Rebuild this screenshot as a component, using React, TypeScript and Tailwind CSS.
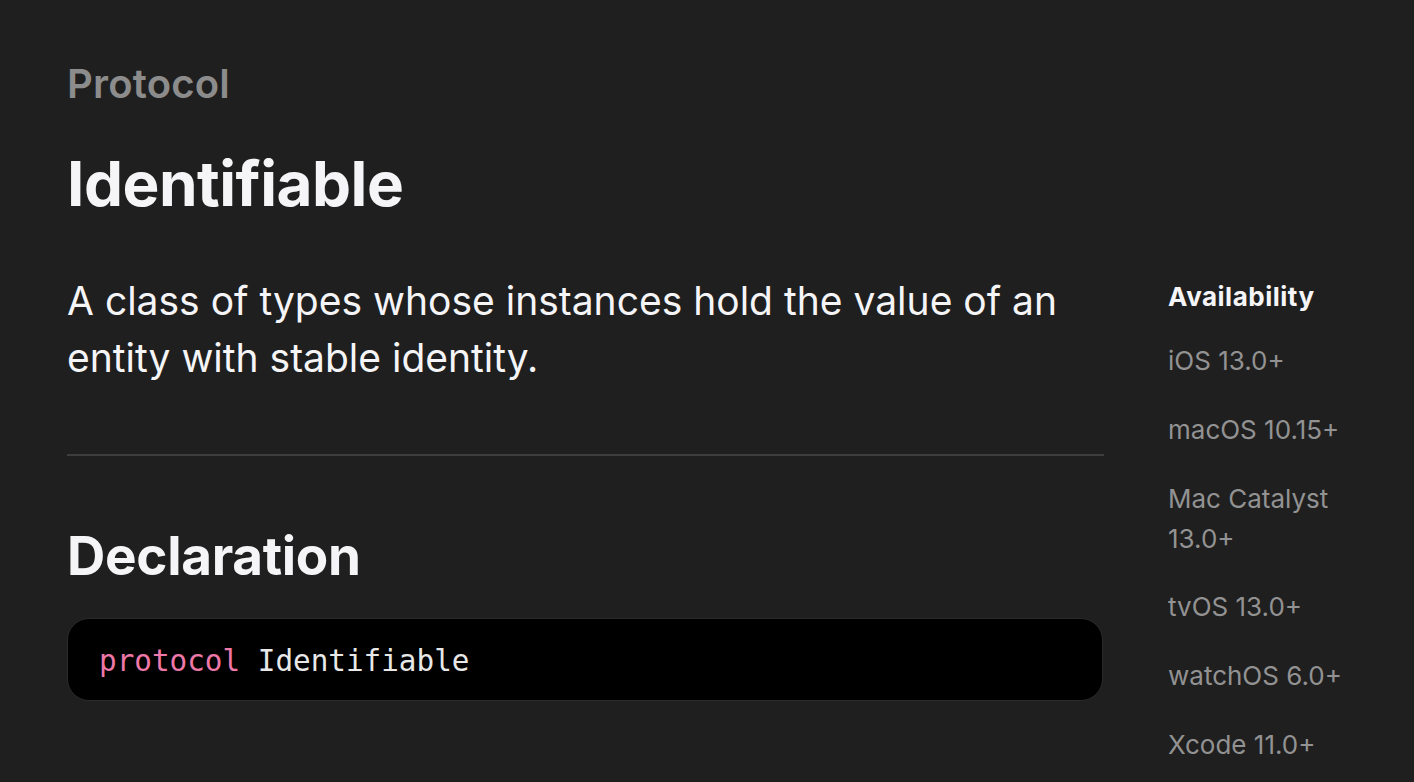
const sans = { fontFamily: "Inter, 'Noto Sans', sans-serif" };

const platforms = [
  "iOS 13.0+",
  "macOS 10.15+",
  "Mac Catalyst 13.0+",
  "tvOS 13.0+",
  "watchOS 6.0+",
  "Xcode 11.0+",
];

export default function App() {
  return (
    <div
      className="h-[782px] w-[1414px] overflow-hidden bg-[#1f1f1f] pl-[67px] pt-[60px] text-[#f5f5f7]"
      style={sans}
    >
      <p className="text-[40px] font-semibold leading-[48px] tracking-[0.2px] text-[#8c8c8c]">
        Protocol
      </p>
      <h1 className="mt-[40px] text-[62px] font-bold leading-[72px] tracking-[-0.5px]">
        Identifiable
      </h1>

      <div className="mt-[52px] flex gap-[64px]">
        <main className="w-[1037px] shrink-0">
          <p className="text-[39px] leading-[57px]">
            A class of types whose instances hold the value of an entity with
            stable identity.
          </p>
          <hr className="mt-[68px] border-0 border-t-2 border-[#3e3e3e]" />
          <h2 className="mt-[68px] text-[53px] font-bold leading-[64px] tracking-[-0.3px]">
            Declaration
          </h2>
          <div className="mt-[30px] flex h-[83px] w-[1036px] items-center rounded-[22px] border border-[#2a2a2a] bg-black pl-[31px] pt-[4px]">
            <code
              className="text-[29.3px] leading-none text-[#e8e8e8]"
              style={{ fontFamily: "'DejaVu Sans Mono', 'Liberation Mono', monospace" }}
            >
              <span className="text-[#ee78a8]">protocol</span> Identifiable
            </code>
          </div>
        </main>

        <aside className="mt-[9px] flex flex-col">
          <h3 className="text-[26px] font-bold leading-[32px] tracking-[0.5px]">
            Availability
          </h3>
          <ul className="mt-[28px] flex w-[190px] flex-col gap-[28.8px]">
            {platforms.map((p) => (
              <li key={p} className="text-[26px] leading-[40px] text-[#929292]">
                {p}
              </li>
            ))}
          </ul>
        </aside>
      </div>
    </div>
  );
}
